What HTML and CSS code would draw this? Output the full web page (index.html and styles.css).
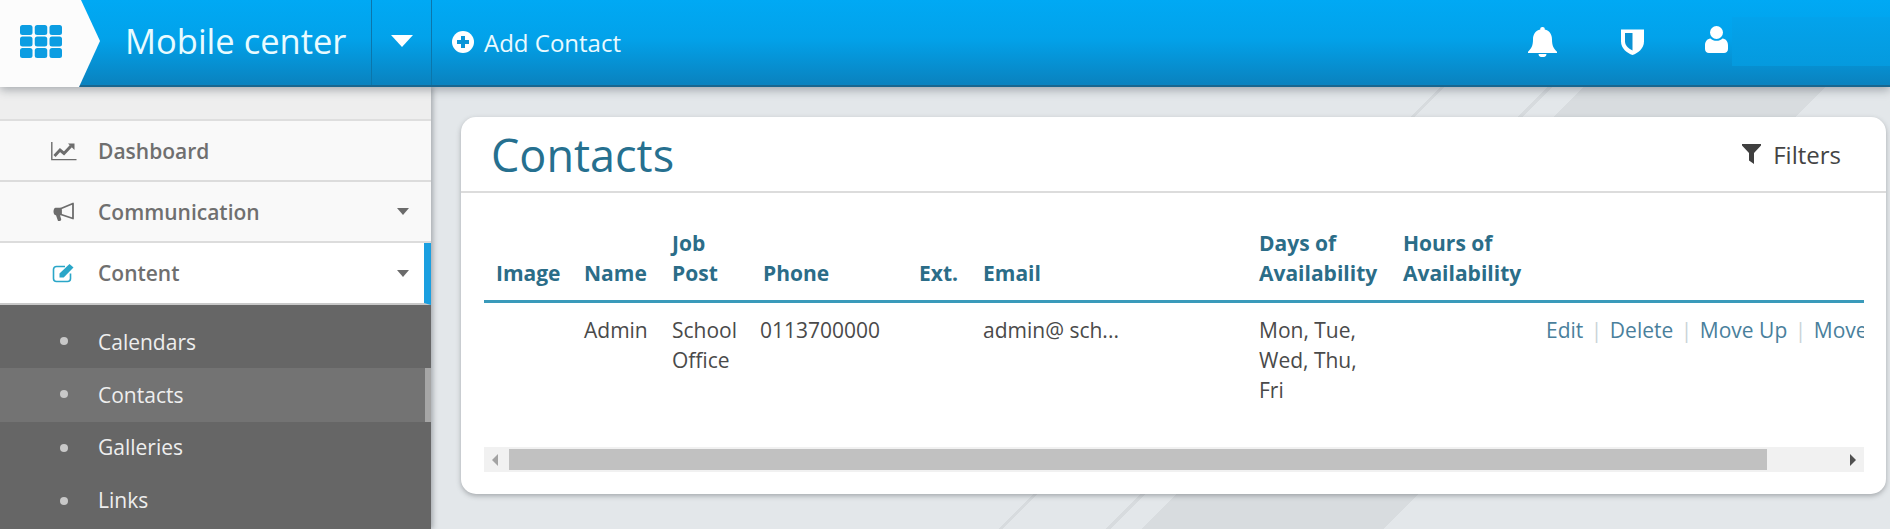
FILE: index.html
```html
<!DOCTYPE html>
<html lang="en">
<head>
<meta charset="utf-8">
<title>Mobile center - Contacts</title>
<link rel="stylesheet" href="styles.css">
</head>
<body>
<header class="topbar">
  <div class="logo">
    <svg class="logo-grid" viewBox="0 0 42 33" width="42" height="33" aria-hidden="true">
      <g fill="#0c9de2">
        <rect x="0" y="0" width="12.5" height="10" rx="2.5"/><rect x="14.75" y="0" width="12.5" height="10" rx="2.5"/><rect x="29.5" y="0" width="12.5" height="10" rx="2.5"/>
        <rect x="0" y="11.5" width="12.5" height="10" rx="2.5"/><rect x="14.75" y="11.5" width="12.5" height="10" rx="2.5"/><rect x="29.5" y="11.5" width="12.5" height="10" rx="2.5"/>
        <rect x="0" y="23" width="12.5" height="10" rx="2.5"/><rect x="14.75" y="23" width="12.5" height="10" rx="2.5"/><rect x="29.5" y="23" width="12.5" height="10" rx="2.5"/>
      </g>
    </svg>
  </div>
  <div class="brand">Mobile center</div>
  <div class="brand-toggle"><span class="caret-white"></span></div>
  <div class="add-contact">
    <svg viewBox="0 0 22 22" width="22" height="22" aria-hidden="true">
      <circle cx="11" cy="11" r="11" fill="#fff"/>
      <path d="M9 5h4v4h4v4h-4v4H9v-4H5V9h4z" fill="#0a95d8"/>
    </svg>
    <span>Add Contact</span>
  </div>
  <div class="top-icons">
    <svg class="ic-bell" viewBox="0 0 29 30" width="29" height="30" aria-hidden="true">
      <path d="M14.5 0a2.2 2.2 0 0 1 2.2 2.6C21.6 3.6 24 7.6 24 12.5c0 6 1.6 9 5 12.3v1.2H0v-1.2c3.4-3.3 5-6.300 5-12.300 0-4.900 2.400-8.900 7.300-9.900A2.200 2.200 0 0 1 14.500 0z" fill="#fff"/>
      <path d="M10.500 27h8a4 3.200 0 0 1-8 0z" fill="#fff"/>
    </svg>
    <svg class="ic-shield" viewBox="0 0 23 26" width="23" height="26" aria-hidden="true">
      <path d="M0 0.500h23v12c0 7-6 11.500-11.500 13.500C6 24 0 19.500 0 12.500z" fill="#fff"/>
      <path d="M4 4h7.500v17.500C8 19.800 4 16.800 4 12.500z" fill="#0a92d4"/>
    </svg>
    <svg class="ic-user" viewBox="0 0 23 27" width="23" height="27" aria-hidden="true">
      <circle cx="11.500" cy="6.500" r="6.500" fill="#fff"/>
      <path d="M5.500 12.500c1.500 1.500 3.700 2.300 6 2.300s4.500-.8 6-2.300c3.500.4 5.500 3 5.500 7V23c0 2.500-1.800 4-4 4H4c-2.200 0-4-1.500-4-4v-3.500c0-4 2-6.600 5.500-7z" fill="#fff"/>
    </svg>
    <div class="user-block"></div>
  </div>
</header>

<div class="page">
  <aside class="sidebar">
    <div class="side-top"></div>
    <ul class="nav">
      <li class="nav-item">
        <svg class="nav-icon" viewBox="0 0 26 20" width="26" height="20" aria-hidden="true">
          <path d="M.8 1v17.600H25.500" fill="none" stroke="#6d6d6d" stroke-width="1.400"/>
          <path d="M3.500 15l5.500-6 4 3.500 7-7.500" fill="none" stroke="#6d6d6d" stroke-width="3"/>
          <path d="M17 2.500h6.500V9z" fill="#6d6d6d"/>
        </svg>
        <span class="nav-label">Dashboard</span>
      </li>
      <li class="nav-item">
        <svg class="nav-icon" viewBox="0 0 26 20" width="26" height="20" aria-hidden="true">
          <path d="M10 6.500L22 1.500v15L10 12.500z" fill="none" stroke="#6d6d6d" stroke-width="1.800" stroke-linejoin="round"/>
          <path d="M4.500 5.700H10v7.600H9l1.300 4.200-1 1.500H7l-2-5.700c-1.500 0-2.500-1.500-2.500-3.800s1-3.800 2-3.800z" fill="#6d6d6d"/>
        </svg>
        <span class="nav-label">Communication</span>
        <span class="caret-gray"></span>
      </li>
      <li class="nav-item nav-item-active">
        <svg class="nav-icon" viewBox="0 0 26 20" width="26" height="20" aria-hidden="true">
          <path d="M14 3.500H5.500c-1.800 0-3 1.200-3 3v9c0 1.800 1.200 3 3 3h11c1.800 0 3-1.200 3-3v-5" fill="none" stroke="#2aa6c8" stroke-width="1.600"/>
          <path d="M8.500 10.500L18.500 1l4 3.600-9.800 10H8.500z" fill="#2aa6c8"/>
        </svg>
        <span class="nav-label">Content</span>
        <span class="caret-gray"></span>
      </li>
    </ul>
    <ul class="subnav">
      <li class="sub-item sub-item-low">Calendars</li>
      <li class="sub-item sub-item-low sub-item-active">Contacts</li>
      <li class="sub-item">Galleries</li>
      <li class="sub-item">Links</li>
    </ul>
  </aside>

  <main class="main">
    <section class="card">
      <div class="card-head">
        <h1 class="card-title">Contacts</h1>
        <div class="filters">
          <svg viewBox="0 0 19 20" width="19" height="20" aria-hidden="true">
            <path d="M0 0h19v1.500L12 9v11l-5-3.500V9L0 1.500z" fill="#3f3f3f"/>
          </svg>
          <span>Filters</span>
        </div>
      </div>
      <div class="card-body">
        <div class="table-wrap">
          <table class="contacts">
            <colgroup>
              <col class="c-image"><col class="c-name"><col class="c-post"><col class="c-phone"><col class="c-ext"><col class="c-email"><col class="c-days"><col class="c-hours"><col class="c-actions">
            </colgroup>
            <thead>
              <tr>
                <th>Image</th><th>Name</th><th>Job<br>Post</th><th>Phone</th><th>Ext.</th><th>Email</th><th>Days of<br>Availability</th><th>Hours of<br>Availability</th><th></th>
              </tr>
            </thead>
            <tbody>
              <tr>
                <td></td>
                <td>Admin</td>
                <td>School<br>Office</td>
                <td class="td-phone">0113700000</td>
                <td></td>
                <td>admin@ sch...</td>
                <td>Mon, Tue,<br>Wed, Thu,<br>Fri</td>
                <td></td>
                <td class="td-actions"><a>Edit</a><i>|</i><a>Delete</a><i>|</i><a>Move Up</a><i>|</i><a>Move Down</a></td>
              </tr>
            </tbody>
          </table>
        </div>
        <div class="hscroll">
          <span class="arrow-left"></span>
          <div class="hscroll-thumb"></div>
          <span class="arrow-right"></span>
        </div>
      </div>
    </section>
  </main>
</div>
</body>
</html>
```

FILE: styles.css
```css
* { box-sizing: border-box; }

html, body { height: 100%; }

body {
  margin: 0;
  height: 529px;
  overflow: hidden;
  display: flex;
  flex-direction: column;
  font-family: "Open Sans", "Liberation Sans", sans-serif;
  background-color: #e3e7ea;
  background-image: linear-gradient(135deg,
    transparent 1080px, #d7dbde 1080px, #d7dbde 1083px, transparent 1083px,
    transparent 1156px, #d7dbde 1156px, #d7dbde 1159px, transparent 1159px,
    transparent 1181px, #d8dcdf 1181px, #d8dcdf 1352px, transparent 1352px);
}

ul { list-style: none; margin: 0; padding: 0; }

/* Top bar */
.topbar {
  position: relative;
  z-index: 2;
  flex: 0 0 87px;
  display: flex;
  align-items: stretch;
  background: linear-gradient(#00a9f4 0%, #02a2ea 45%, #0a83c0 98%);
  border-bottom: 2px solid #19668f;
  box-shadow: 0 3px 9px rgba(60, 70, 80, .4);
  color: #fff;
}

.logo {
  flex: 0 0 100px;
  margin-bottom: -2px;
  background: #fcfcfc;
  clip-path: polygon(0 0, 81px 0, 100px 41px, 79px 87px, 0 87px);
  display: flex;
  align-items: flex-start;
  padding: 25px 0 0 20px;
}

.brand {
  flex: 0 0 272px;
  padding-left: 25px;
  font-size: 34.5px;
  line-height: 82px;
  color: #e9fbff;
  border-right: 1px solid #0b76ab;
}

.brand-toggle {
  flex: 0 0 60px;
  border-right: 1px solid #0b76ab;
  display: flex;
  align-items: center;
  justify-content: center;
  padding-bottom: 3px;
}

.caret-white {
  width: 0;
  height: 0;
  border-left: 11px solid transparent;
  border-right: 11px solid transparent;
  border-top: 12px solid #fff;
}

.add-contact {
  display: flex;
  align-items: center;
  gap: 10px;
  padding: 0 0 1px 20px;
  font-size: 24px;
  color: #eafaff;
}

.top-icons {
  margin-left: auto;
  display: flex;
  align-items: flex-start;
}

.ic-bell { margin-top: 27px; }
.ic-shield { margin: 29px 0 0 64px; }
.ic-user { margin: 26px 0 0 61px; }

.user-block {
  width: 158px;
  height: 49px;
  margin: 17px 0 0 4px;
  background: linear-gradient(#03a3ec, #059ade);
}

/* Page */
.page {
  flex: 1 1 auto;
  min-height: 0;
  display: flex;
}

.sidebar {
  position: relative;
  z-index: 1;
  flex: 0 0 431px;
  background: #666;
  box-shadow: 2px 0 5px rgba(90, 95, 100, .45);
  overflow: hidden;
}

.side-top {
  height: 34px;
  background: #eee;
  border-bottom: 2px solid #dedede;
}

.nav-item {
  height: 61px;
  display: flex;
  align-items: center;
  padding: 0 22px 0 51px;
  background: #f9f9f9;
  border-bottom: 2px solid #dcdcdc;
  color: #6f6f6f;
}

.nav-item-active {
  height: 62px;
  background: #fff;
  border-right: 7px solid #1a9fe0;
  border-bottom-color: #c9c9c9;
  padding-right: 15px;
}

.nav-icon { flex: 0 0 26px; }

.nav-label {
  margin-left: 21px;
  font-size: 21px;
  font-weight: 600;
}

.caret-gray {
  margin-left: auto;
  width: 0;
  height: 0;
  border-left: 6px solid transparent;
  border-right: 6px solid transparent;
  border-top: 7px solid #6b6b6b;
}

.subnav { padding-top: 10px; }

.sub-item {
  position: relative;
  height: 53px;
  line-height: 51px;
  padding-left: 98px;
  font-size: 21px;
  color: #eee;
}

.sub-item-low { line-height: 55px; }

.sub-item::before {
  content: "";
  position: absolute;
  left: 60px;
  top: 22px;
  width: 8px;
  height: 8px;
  border-radius: 50%;
  background: #c8c8c8;
}

.sub-item-active {
  height: 54px;
  background: #737373;
  border-right: 6px solid #a6a6a6;
}

/* Main */
.main {
  flex: 1 1 auto;
  min-width: 0;
  padding: 30px 4px 0 30px;
}

.card {
  background: #fff;
  border-radius: 15px;
  box-shadow: 0 2px 5px rgba(90, 95, 100, .45);
}

.card-head {
  height: 76px;
  display: flex;
  align-items: center;
  justify-content: space-between;
  padding: 0 45px 0 30px;
  border-bottom: 2px solid #dcdcdc;
}

.card-title {
  margin: 0;
  font-size: 45px;
  font-weight: 400;
  line-height: 75px;
  color: #26708f;
}

.filters {
  display: flex;
  align-items: center;
  gap: 12px;
  font-size: 24px;
  color: #444;
}

.card-body { padding: 35px 22px 22px 23px; }

.table-wrap { overflow: hidden; }

.contacts {
  width: 1550px;
  table-layout: fixed;
  border-collapse: collapse;
  font-size: 21px;
  line-height: 30px;
}

.c-image { width: 88px; }
.c-name { width: 88px; }
.c-post { width: 91px; }
.c-phone { width: 156px; }
.c-ext { width: 64px; }
.c-email { width: 276px; }
.c-days { width: 144px; }
.c-hours { width: 143px; }
.c-actions { width: 500px; }

.contacts th {
  padding: 0 0 12px 12px;
  text-align: left;
  vertical-align: bottom;
  font-weight: 700;
  color: #2b6d88;
  border-bottom: 3px solid #3a9aba;
}

.contacts td {
  padding: 12px 0 42px 12px;
  vertical-align: top;
  color: #4a4a4a;
}

.contacts .td-phone { padding-left: 9px; }

.td-actions { white-space: nowrap; }
.td-actions a { color: #4a7f9c; }
.td-actions i { font-style: normal; color: #c9d3d8; margin: 0 7.5px; }

/* Scrollbar */
.hscroll {
  position: relative;
  height: 25px;
  background: #f1f1f1;
  padding: 2px 97px 0 25px;
}

.hscroll-thumb {
  height: 21px;
  background: #c1c1c1;
}

.arrow-left, .arrow-right {
  position: absolute;
  top: 7px;
  width: 0;
  height: 0;
  border-top: 6px solid transparent;
  border-bottom: 6px solid transparent;
}

.arrow-left { left: 8px; border-right: 6px solid #a3a3a3; }
.arrow-right { right: 8px; border-left: 6px solid #505050; }
```
